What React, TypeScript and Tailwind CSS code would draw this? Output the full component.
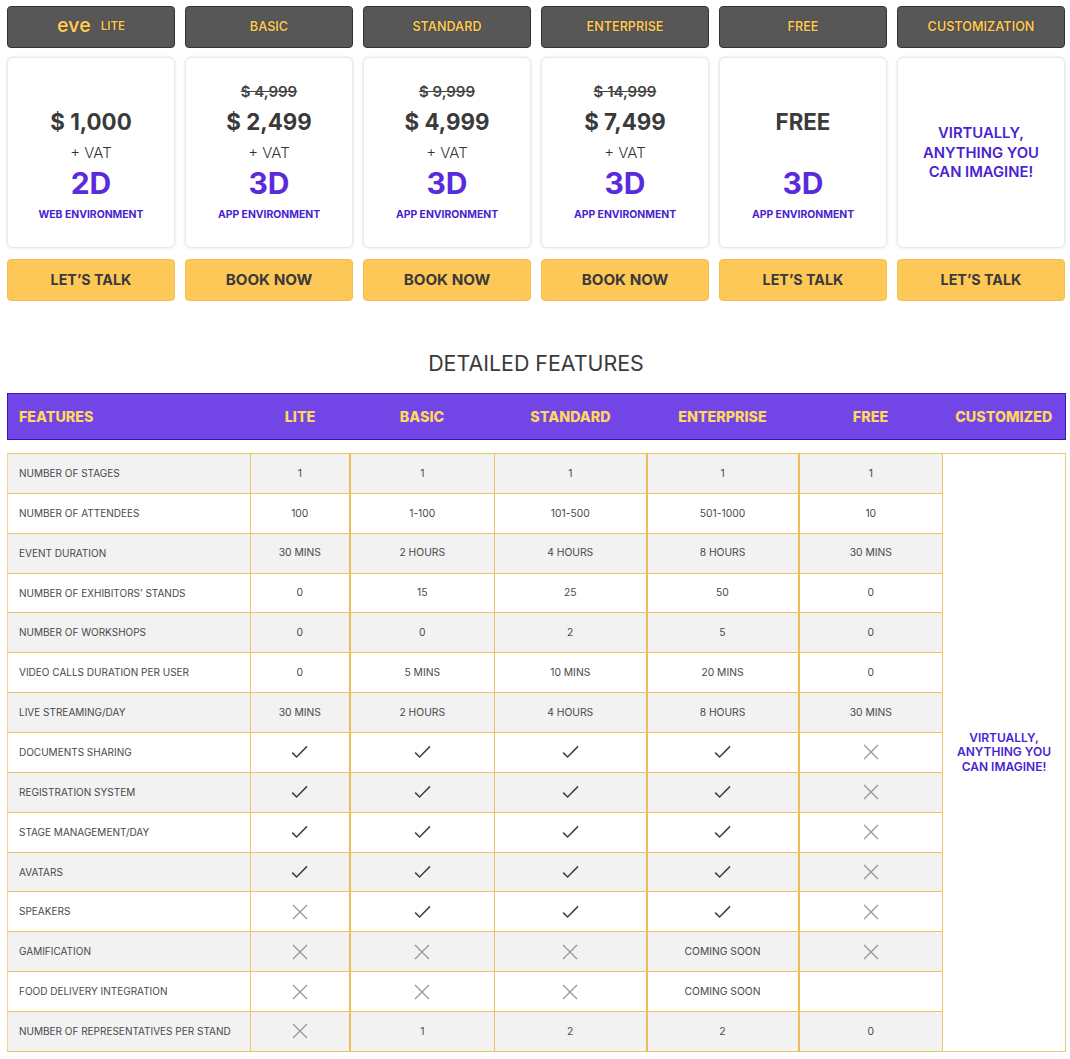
const FONT = "font-['Inter','Noto_Sans',sans-serif]";

const tabs = ["LITE", "BASIC", "STANDARD", "ENTERPRISE", "FREE", "CUSTOMIZATION"];

type Plan = { old?: string; price: string; vat: boolean; dim?: string; env?: string; custom?: boolean; cta: string };
const plans: Plan[] = [
  { price: "$ 1,000", vat: true, dim: "2D", env: "WEB ENVIRONMENT", cta: "LET’S TALK" },
  { old: "$ 4,999", price: "$ 2,499", vat: true, dim: "3D", env: "APP ENVIRONMENT", cta: "BOOK NOW" },
  { old: "$ 9,999", price: "$ 4,999", vat: true, dim: "3D", env: "APP ENVIRONMENT", cta: "BOOK NOW" },
  { old: "$ 14,999", price: "$ 7,499", vat: true, dim: "3D", env: "APP ENVIRONMENT", cta: "BOOK NOW" },
  { price: "FREE", vat: false, dim: "3D", env: "APP ENVIRONMENT", cta: "LET’S TALK" },
  { price: "", vat: false, custom: true, cta: "LET’S TALK" },
];

const Y = "y";
const N = "n";
const rows: [string, string, string, string, string, string][] = [
  ["NUMBER OF STAGES", "1", "1", "1", "1", "1"],
  ["NUMBER OF ATTENDEES", "100", "1-100", "101-500", "501-1000", "10"],
  ["EVENT DURATION", "30 MINS", "2 HOURS", "4 HOURS", "8 HOURS", "30 MINS"],
  ["NUMBER OF EXHIBITORS’ STANDS", "0", "15", "25", "50", "0"],
  ["NUMBER OF WORKSHOPS", "0", "0", "2", "5", "0"],
  ["VIDEO CALLS DURATION PER USER", "0", "5 MINS", "10 MINS", "20 MINS", "0"],
  ["LIVE STREAMING/DAY", "30 MINS", "2 HOURS", "4 HOURS", "8 HOURS", "30 MINS"],
  ["DOCUMENTS SHARING", Y, Y, Y, Y, N],
  ["REGISTRATION SYSTEM", Y, Y, Y, Y, N],
  ["STAGE MANAGEMENT/DAY", Y, Y, Y, Y, N],
  ["AVATARS", Y, Y, Y, Y, N],
  ["SPEAKERS", N, Y, Y, Y, N],
  ["GAMIFICATION", N, N, N, "COMING SOON", N],
  ["FOOD DELIVERY INTEGRATION", N, N, N, "COMING SOON", ""],
  ["NUMBER OF REPRESENTATIVES PER STAND", N, "1", "2", "2", "0"],
];

const widths = ["w-[243px]", "w-[99px]", "w-[145px]", "w-[152px]", "w-[152px]", "w-[144px]", "w-[123px]"];

function Check() {
  return (
    <svg width="17" height="14" viewBox="0 0 17 14" className="mx-auto block" fill="none" stroke="#3f3f3f" strokeWidth="1.5">
      <path d="M1.2 7.6 L5.6 12 L16 1.4" />
    </svg>
  );
}

function Cross() {
  return (
    <svg width="16" height="16" viewBox="0 0 16 16" className="mx-auto block" fill="none" stroke="#9a9a9a" strokeWidth="1.4">
      <path d="M1 1 L15 15 M15 1 L1 15" />
    </svg>
  );
}

function Cell({ v, cls }: { v: string; cls: string }) {
  return (
    <td className={`border-y border-x border-[#eec266] text-center align-middle text-[#484848] text-[10.3px] p-0 ${cls}`}>
      {v === Y ? <Check /> : v === N ? <Cross /> : v}
    </td>
  );
}

export default function App() {
  return (
    <div className={`${FONT} bg-white w-[1070px] h-[1059px] overflow-hidden pl-[7px] pr-[5px] pt-[6px]`}>
      <div className="grid grid-cols-6 gap-x-[10px]">
        {tabs.map((t, i) => (
          <div
            key={t}
            className="h-[42px] rounded-[4px] bg-[#575757] border border-[#333333] flex items-center justify-center gap-[10px] text-[#fdc857] text-[12.6px] font-semibold [text-shadow:0_0_1px_#222]"
          >
            {i === 0 && <span className="text-[19.5px] leading-none font-semibold -mt-[3px]">eve</span>}
            <span className={i === 0 ? "text-[11.6px]" : ""}>{t}</span>
          </div>
        ))}
      </div>

      <div className="grid grid-cols-6 gap-x-[10px] mt-[9px]">
        {plans.map((p, i) => (
          <div
            key={i}
            className="h-[191px] rounded-[6px] bg-white border border-[#e9e9e9] shadow-[0_0_3px_rgba(0,0,0,0.12)] flex flex-col items-center text-center"
          >
            {p.custom ? (
              <div className="flex-1 flex items-center justify-center pt-[2px] text-[#4a1fd0] text-[14.8px] leading-[19.5px] font-semibold">
                VIRTUALLY,
                <br />
                ANYTHING YOU
                <br />
                CAN IMAGINE!
              </div>
            ) : (
              <>
                <div className="h-[24px] mt-[22px] text-[15px] leading-[24px] font-semibold text-[#444444] line-through">
                  {p.old ?? ""}
                </div>
                <div className="h-[30px] mt-[3px] text-[22.3px] leading-[30px] font-bold text-[#3a3a3a]">{p.price}</div>
                <div className="h-[24px] mt-[4px] text-[15px] leading-[24px] font-light text-[#333333]">{p.vat ? "+ VAT" : ""}</div>
                <div className="h-[36px] text-[30px] leading-[36px] font-bold text-[#5a2bdc]">{p.dim}</div>
                <div className="mt-[6px] text-[10.4px] leading-[16px] font-bold text-[#4a1fd0]">{p.env}</div>
              </>
            )}
          </div>
        ))}
      </div>

      <div className="grid grid-cols-6 gap-x-[10px] mt-[11px]">
        {plans.map((p, i) => (
          <div
            key={i}
            className={`h-[42px] rounded-[4px] bg-[#fdc857] border border-[#f4c050] flex items-center justify-center text-[#3a3a3a] font-bold ${
              p.cta === "BOOK NOW" ? "text-[15.2px]" : "text-[14.3px]"
            }`}
          >
            {p.cta}
          </div>
        ))}
      </div>

      <h2 className="mt-[47px] h-[30px] text-center text-[21.4px] leading-[30px] font-normal text-[#3a3a3a]">DETAILED FEATURES</h2>

      <table className="mt-[15px] w-[1058px] table-fixed border-collapse">
        <colgroup>
          {widths.map((w) => (
            <col key={w} className={w} />
          ))}
        </colgroup>
        <thead>
          <tr className="h-[46px] bg-[#7245e6] border border-[#3a16b8] text-[#fdd75f] text-[14.3px] font-extrabold">
            <th className="text-left pl-[11px] font-extrabold">FEATURES</th>
            {["LITE", "BASIC", "STANDARD", "ENTERPRISE", "FREE", "CUSTOMIZED"].map((h) => (
              <th key={h} className="text-center font-extrabold p-0 whitespace-nowrap">
                {h}
              </th>
            ))}
          </tr>
        </thead>
      </table>

      <table className="mt-[13px] w-[1058px] table-fixed border-collapse">
        <colgroup>
          {widths.map((w) => (
            <col key={w} className={w} />
          ))}
        </colgroup>
        <tbody>
          {rows.map((r, i) => {
            const bg = i % 2 === 0 ? "bg-[#f2f2f2]" : "bg-white";
            const free = i === 0 ? "border-r" : "border-r-0";
            return (
              <tr key={r[0]} className="h-[39.87px]">
                <td className={`border border-[#eec266] border-l-[#efd79b] text-left align-middle pl-[11px] text-[#484848] text-[10px] whitespace-nowrap ${bg}`}>
                  {r[0]}
                </td>
                <Cell v={r[1]} cls={bg} />
                <Cell v={r[2]} cls={`${bg} border-l-2 border-l-[#edbd58]`} />
                <Cell v={r[3]} cls={bg} />
                <Cell v={r[4]} cls={`${bg} border-l-2 border-l-[#edbd58]`} />
                <Cell v={r[5]} cls={`${bg} border-l-2 border-l-[#edbd58] ${free}`} />
                {i === 0 && (
                  <td
                    rowSpan={rows.length}
                    className="border border-[#e9c878] bg-white text-center align-middle text-[#4a1fd0] text-[12px] leading-[14.5px] font-semibold p-0"
                  >
                    VIRTUALLY,
                    <br />
                    ANYTHING YOU
                    <br />
                    CAN IMAGINE!
                  </td>
                )}
              </tr>
            );
          })}
        </tbody>
      </table>
    </div>
  );
}
